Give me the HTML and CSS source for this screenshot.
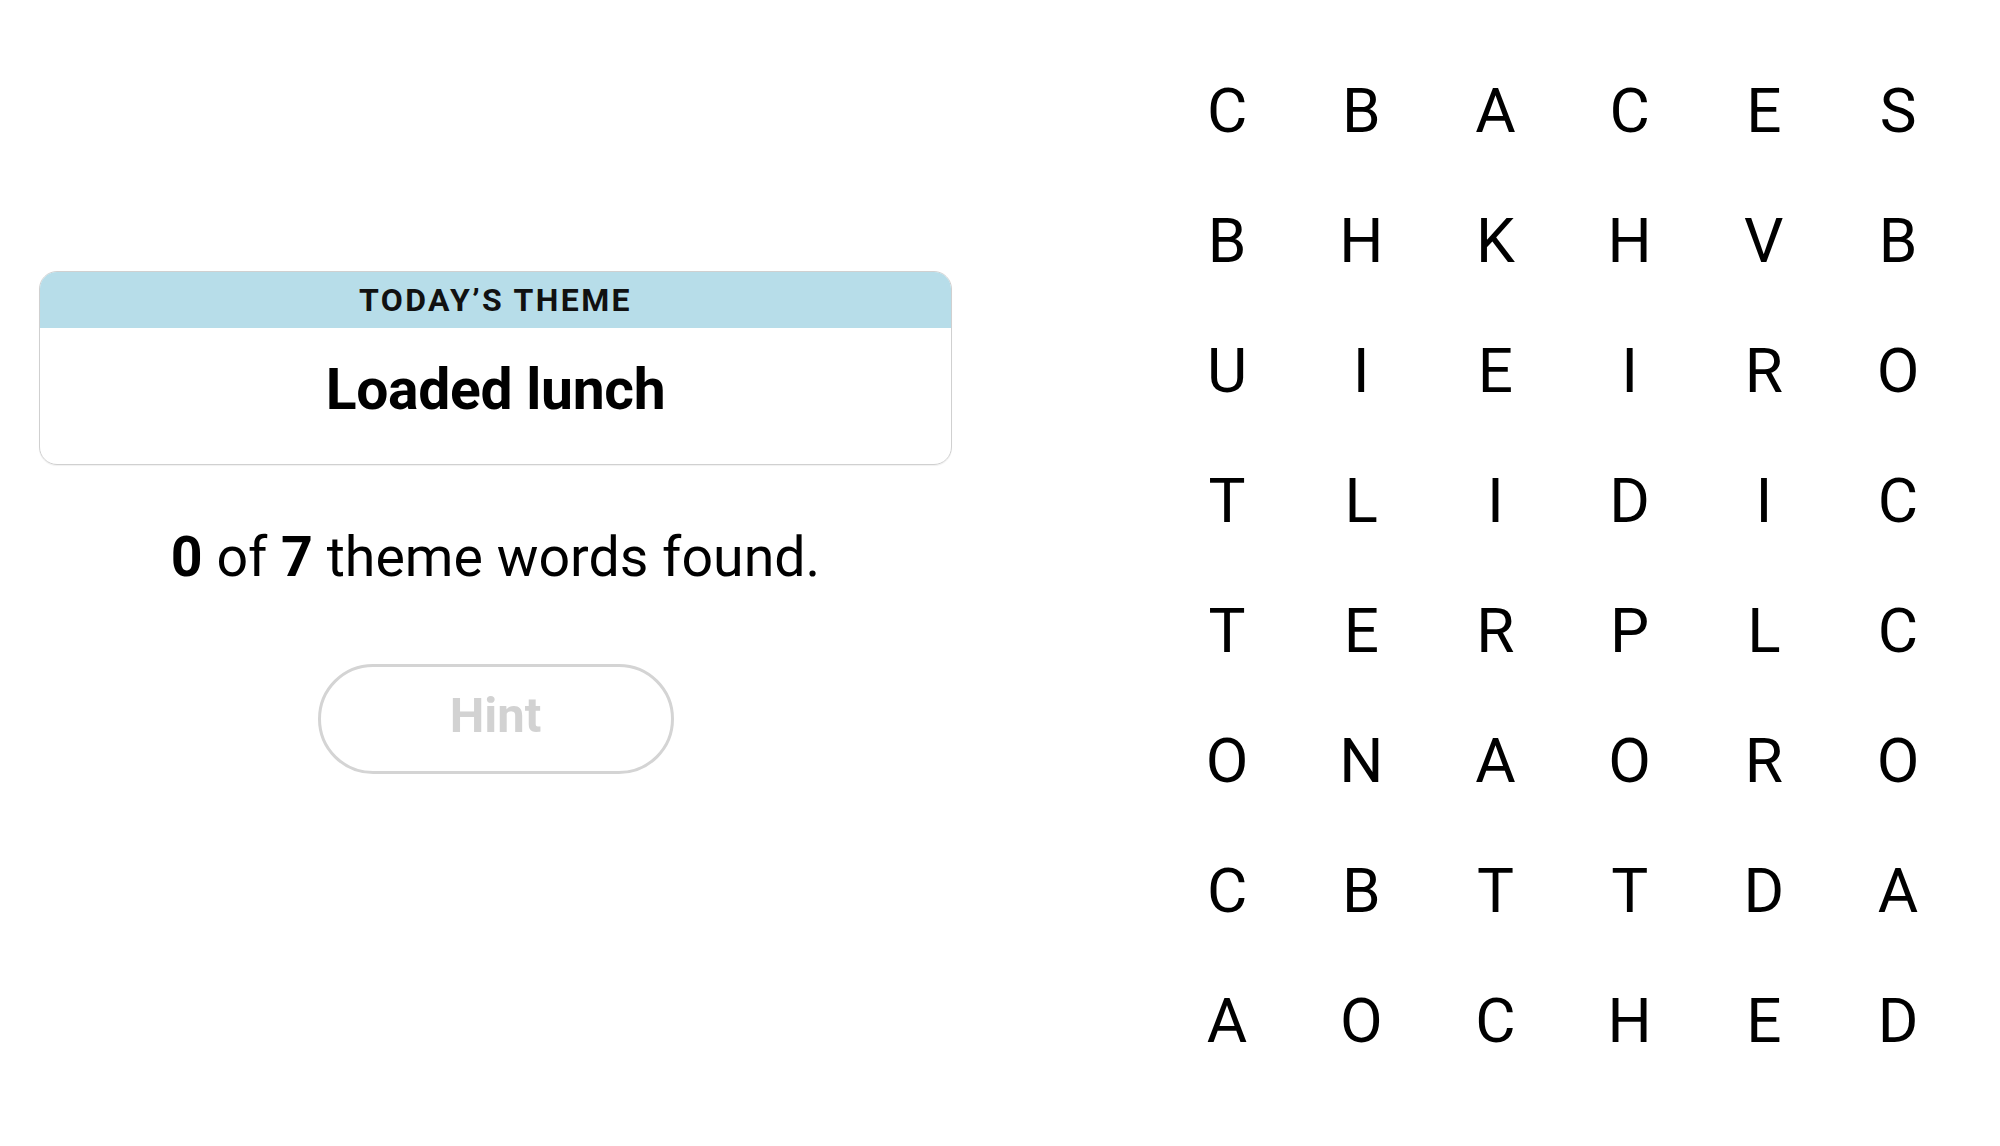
FILE: index.html
```html
<!DOCTYPE html>
<html lang="en">
<head>
<meta charset="utf-8">
<title>Strands</title>
<link rel="stylesheet" href="styles.css">
</head>
<body>
<main class="game">
  <section class="panel">
    <div class="theme-card">
      <div class="theme-header">TODAY’S THEME</div>
      <div class="theme-body">Loaded lunch</div>
    </div>
    <p class="progress"><b>0</b> of <b>7</b> theme words found.</p>
    <button class="hint" type="button" disabled>Hint</button>
  </section>
  <section class="board">
    <span>C</span><span>B</span><span>A</span><span>C</span><span>E</span><span>S</span>
    <span>B</span><span>H</span><span>K</span><span>H</span><span>V</span><span>B</span>
    <span>U</span><span>I</span><span>E</span><span>I</span><span>R</span><span>O</span>
    <span>T</span><span>L</span><span>I</span><span>D</span><span>I</span><span>C</span>
    <span>T</span><span>E</span><span>R</span><span>P</span><span>L</span><span>C</span>
    <span>O</span><span>N</span><span>A</span><span>O</span><span>R</span><span>O</span>
    <span>C</span><span>B</span><span>T</span><span>T</span><span>D</span><span>A</span>
    <span>A</span><span>O</span><span>C</span><span>H</span><span>E</span><span>D</span>
  </section>
</main>
</body>
</html>
```

FILE: styles.css
```css
* {
  box-sizing: border-box;
}

html, body {
  margin: 0;
  padding: 0;
  background: #ffffff;
}

body {
  font-family: Roboto, "Liberation Sans", Arial, sans-serif;
  color: #000000;
  width: 2000px;
  height: 1146px;
  overflow: hidden;
}

.game {
  display: flex;
  align-items: flex-start;
}

.panel {
  width: 913px;
  margin-left: 39px;
  padding-top: 271px;
  display: flex;
  flex-direction: column;
  align-items: center;
}

.theme-card {
  width: 913px;
  height: 194px;
  border: 1px solid #d0d0d0;
  border-radius: 18px;
  overflow: hidden;
  display: flex;
  flex-direction: column;
  box-shadow: 0 1px 1px rgba(0, 0, 0, 0.06);
}

.theme-header {
  height: 56px;
  flex: none;
  background: #b7dde9;
  display: flex;
  align-items: center;
  justify-content: center;
  font-size: 32px;
  font-weight: 700;
  letter-spacing: 2.4px;
  color: #111111;
  padding-bottom: 1px;
}

.theme-body {
  flex: 1;
  display: flex;
  align-items: center;
  justify-content: center;
  font-size: 57px;
  font-weight: 700;
  letter-spacing: -0.3px;
  padding-bottom: 14px;
}

.progress {
  margin: 61px 0 0;
  font-size: 55.5px;
  line-height: 64px;
  font-weight: 400;
  letter-spacing: 0;
  text-align: center;
}

.progress b {
  font-weight: 700;
}

.hint {
  margin-top: 74px;
  width: 356px;
  height: 110px;
  border: 3px solid #d4d4d4;
  border-radius: 55px;
  background: #ffffff;
  color: #d2d2d2;
  font-family: Roboto, "Liberation Sans", Arial, sans-serif;
  font-size: 49px;
  font-weight: 700;
  padding: 0 0 7px;
}

.board {
  margin-left: 208px;
  padding-top: 46px;
  display: grid;
  grid-template-columns: repeat(6, 134.2px);
  grid-auto-rows: 130px;
}

.board span {
  display: flex;
  align-items: center;
  justify-content: center;
  font-size: 62px;
  line-height: 130px;
  font-weight: 400;
}
```
